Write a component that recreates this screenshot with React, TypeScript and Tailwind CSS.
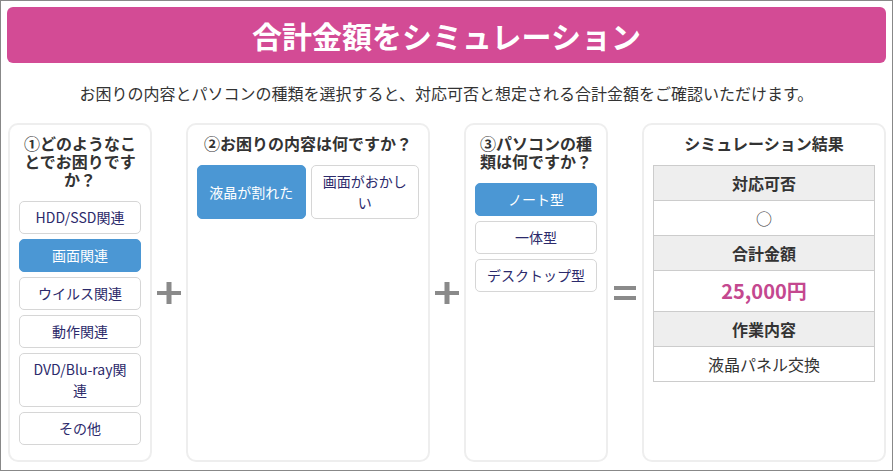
const causes = ["HDD/SSD関連", "画面関連", "ウイルス関連", "動作関連", "DVD/Blu-ray関\n連", "その他"];
const problems = ["液晶が割れた", "画面がおかしい"];
const pcTypes = ["ノート型", "一体型", "デスクトップ型"];

function Choice({ label, active }: { label: string; active?: boolean }) {
  return (
    <button
      className={
        active
          ? "flex items-center justify-center whitespace-pre-line rounded-[5px] border border-[#4b97d4] bg-[#4b97d4] px-[6px] py-[5px] text-center text-[14px] leading-[21px] text-white"
          : "flex items-center justify-center whitespace-pre-line rounded-[5px] border border-[#d6d6d6] bg-white px-[6px] py-[5px] text-center text-[14px] leading-[21px] text-[#2c2a6b]"
      }
    >
      {label}
    </button>
  );
}

function Panel({ title, wide, children }: { title: string; wide?: boolean; children: React.ReactNode }) {
  return (
    <div
      className={
        (wide ? "w-[244px]" : "w-[144px]") +
        " flex shrink-0 flex-col rounded-[10px] border-2 border-[#eeeeee] bg-white p-[9px]"
      }
    >
      <h2 className="mb-[13px] text-center text-[16px] font-bold leading-[18px] text-[#333]">{title}</h2>
      {children}
    </div>
  );
}

function Plus() {
  return (
    <div className="flex w-[34px] shrink-0 items-center justify-center">
      <svg width="24" height="22" viewBox="0 0 24 22">
        <rect x="0" y="9" width="24" height="4" fill="#8a8a8a" />
        <rect x="9.5" y="0" width="5" height="22" fill="#8a8a8a" />
      </svg>
    </div>
  );
}

function Equals() {
  return (
    <div className="flex w-[34px] shrink-0 items-center justify-center">
      <svg width="22" height="14" viewBox="0 0 22 14">
        <rect x="0" y="0" width="22" height="4" fill="#8a8a8a" />
        <rect x="0" y="10" width="22" height="4" fill="#8a8a8a" />
      </svg>
    </div>
  );
}

function HeadCell({ children }: { children: React.ReactNode }) {
  return (
    <div className="border-b border-[#cccccc] bg-[#eeeeee] py-[5px] text-center text-[16px] font-bold leading-[24px] text-[#333]">
      {children}
    </div>
  );
}

function ValueCell({ children, big }: { children: React.ReactNode; big?: boolean }) {
  return (
    <div
      className={
        big
          ? "border-b border-[#cccccc] py-[5px] text-center text-[20px] font-bold leading-[30px] text-[#c4488f]"
          : "border-b border-[#cccccc] py-[5px] text-center text-[16px] leading-[24px] text-[#333]"
      }
    >
      {children}
    </div>
  );
}

export default function App() {
  return (
    <div className="flex h-[471px] w-[893px] flex-col border border-[#888888] bg-white p-[6px] font-['Noto_Sans_CJK_JP',sans-serif]">
      <div className="flex h-[56px] shrink-0 items-center justify-center rounded-[6px] bg-[#d34b95]">
        <h1 className="text-[30px] font-bold leading-none text-white">合計金額をシミュレーション</h1>
      </div>

      <p className="mt-[18px] text-center text-[16px] leading-[24px] text-[#333]">
        お困りの内容とパソコンの種類を選択すると、対応可否と想定される合計金額をご確認いただけます。
      </p>

      <div className="mt-[18px] ml-[1px] flex flex-1 pb-[2px]">
        <Panel title="①どのようなことでお困りですか？">
          <div className="flex flex-col gap-[5px]">
            {causes.map((c) => (
              <Choice key={c} label={c} active={c === "画面関連"} />
            ))}
          </div>
        </Panel>

        <Plus />

        <Panel title="②お困りの内容は何ですか？" wide>
          <div className="grid grid-cols-2 gap-[5px]">
            {problems.map((p) => (
              <Choice key={p} label={p} active={p === "液晶が割れた"} />
            ))}
          </div>
        </Panel>

        <Plus />

        <Panel title="③パソコンの種類は何ですか？">
          <div className="flex flex-col gap-[5px]">
            {pcTypes.map((t) => (
              <Choice key={t} label={t} active={t === "ノート型"} />
            ))}
          </div>
        </Panel>

        <Equals />

        <Panel title="シミュレーション結果" wide>
          <div className="border border-b-0 border-[#cccccc]">
            <HeadCell>対応可否</HeadCell>
            <ValueCell>○</ValueCell>
            <HeadCell>合計金額</HeadCell>
            <ValueCell big>25,000円</ValueCell>
            <HeadCell>作業内容</HeadCell>
            <ValueCell>液晶パネル交換</ValueCell>
          </div>
        </Panel>
      </div>
    </div>
  );
}
